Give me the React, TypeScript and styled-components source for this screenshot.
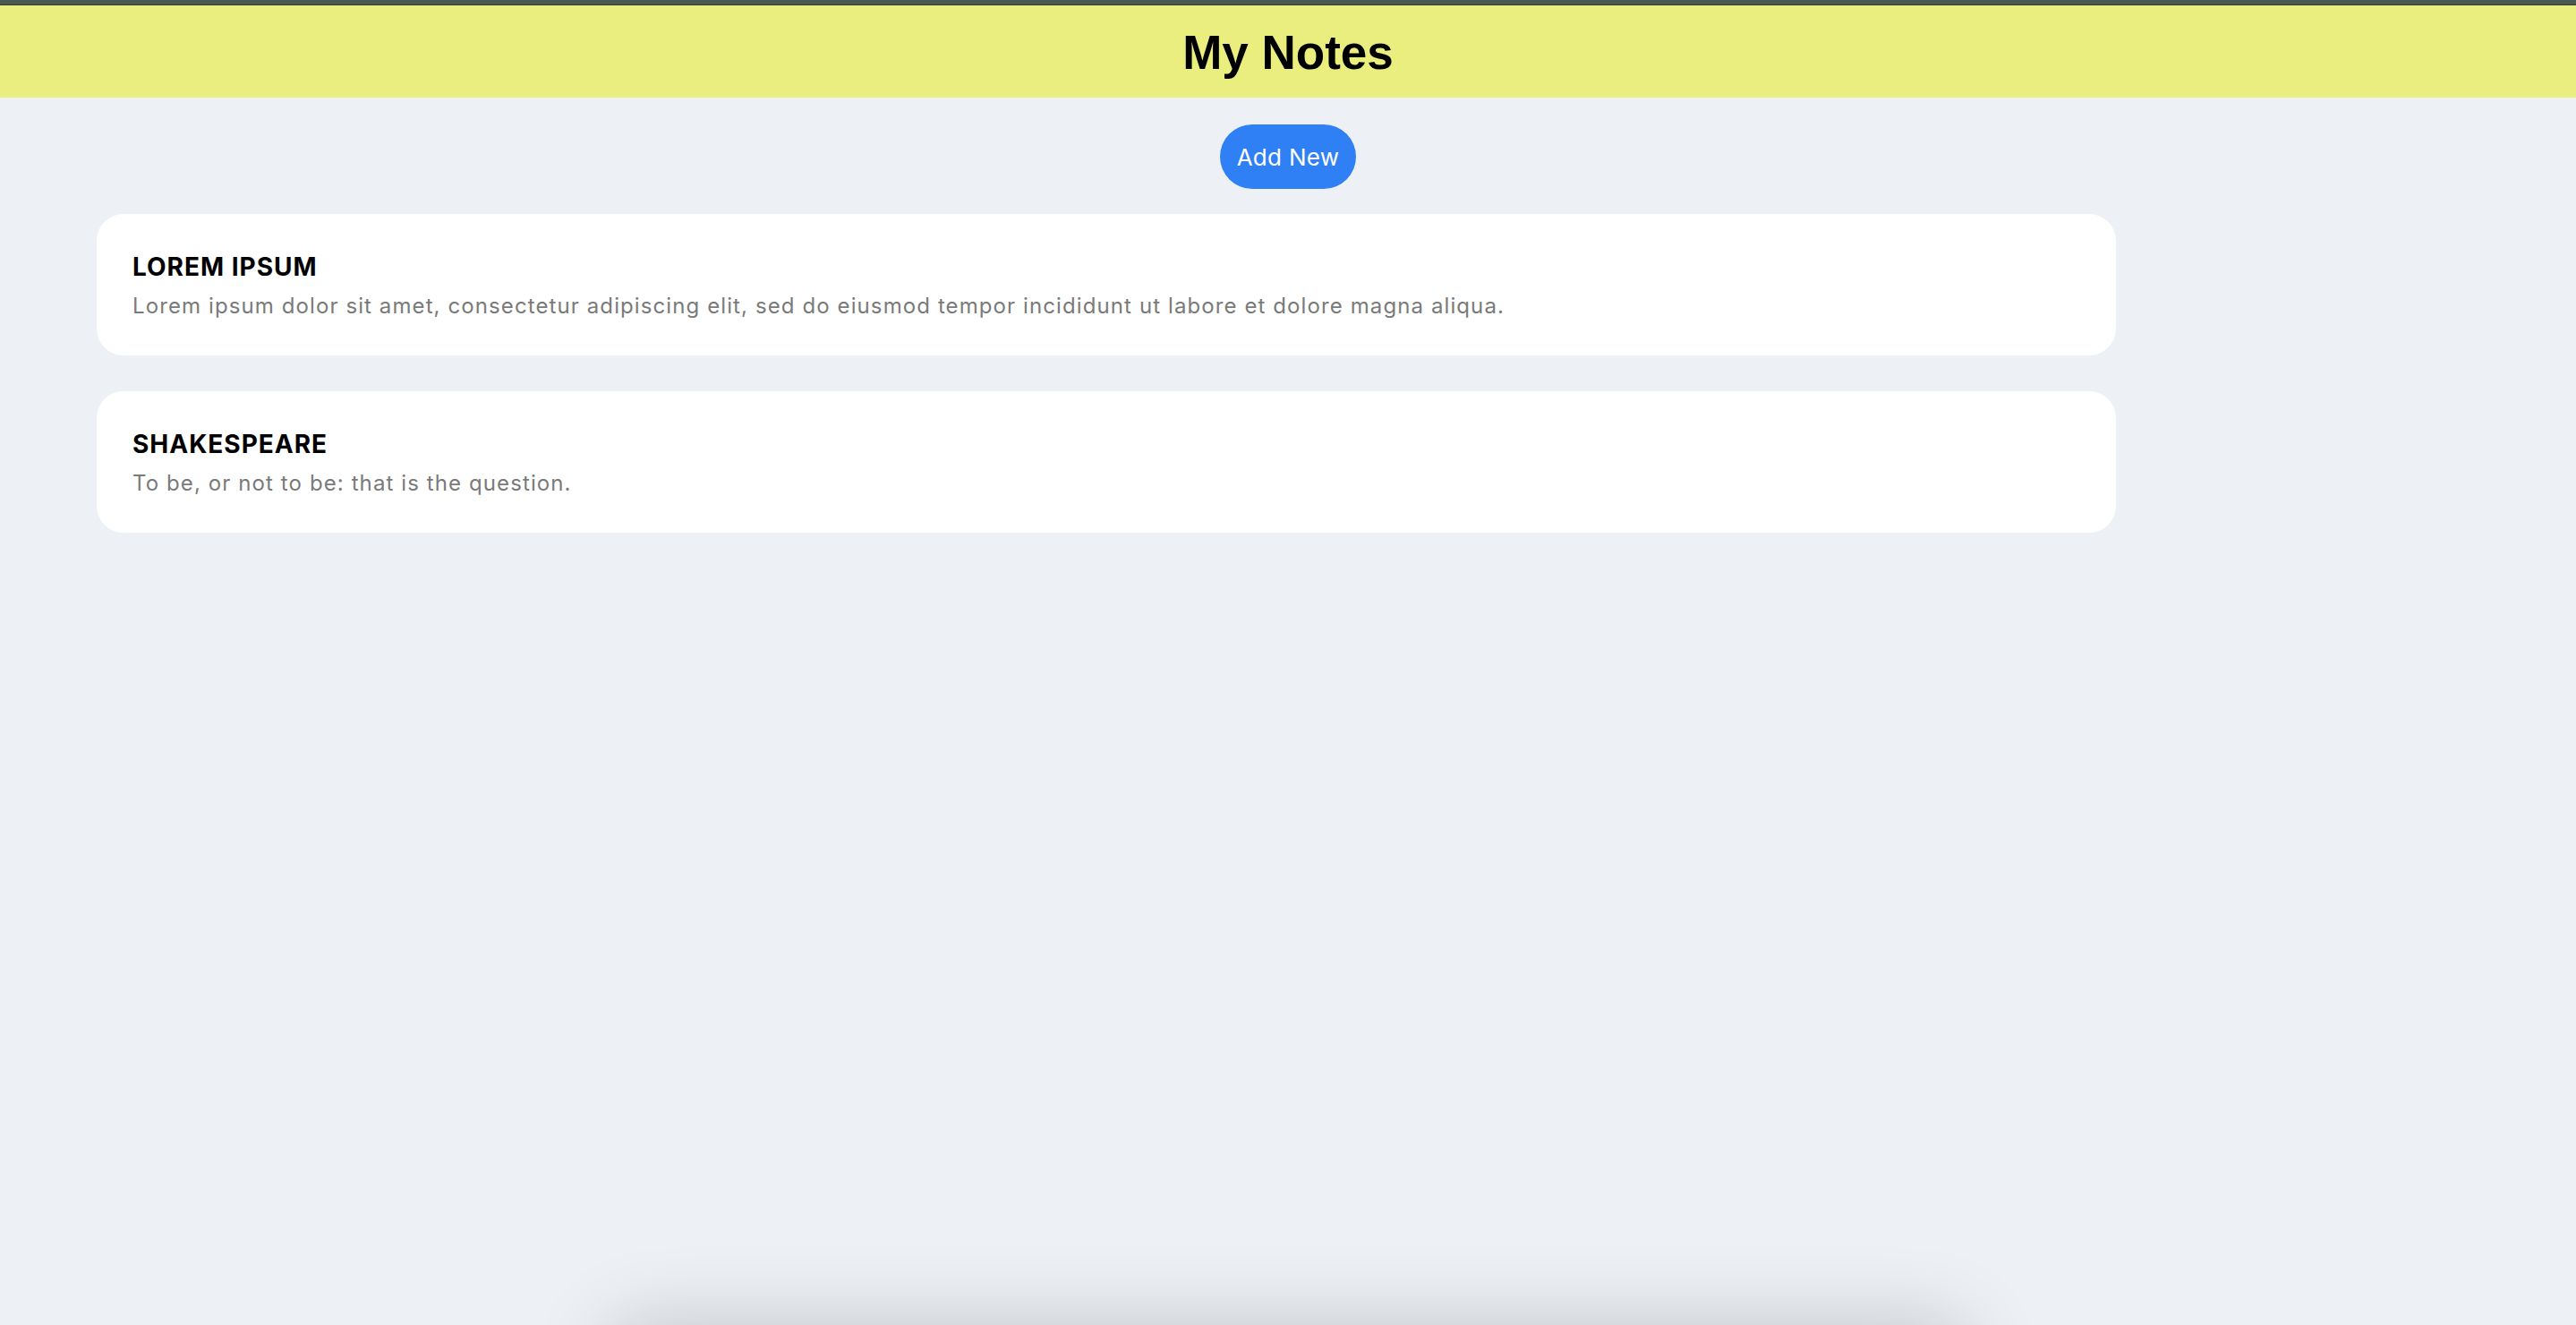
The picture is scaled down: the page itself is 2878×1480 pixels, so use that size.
import React from "react";
import styled, { createGlobalStyle } from "styled-components";

const GlobalStyle = createGlobalStyle`
  html, body {
    margin: 0;
    padding: 0;
    background: #edf0f5;
    min-height: 100%;
  }
  body {
    font-family: Inter, "Noto Sans", sans-serif;
    overflow: hidden;
  }
  #root {
    min-height: 1480px;
  }
`;

const Page = styled.div`
  display: flex;
  flex-direction: column;
  min-height: 1480px;
  background: #edf0f5;
`;

const TopStrip = styled.div`
  height: 5px;
  background: #4a5a53;
  border-bottom: 1px solid #2e3833;
`;

const Header = styled.header`
  height: 103px;
  background: #e9ee7e;
  display: flex;
  align-items: center;
  justify-content: center;
`;

const Title = styled.h1`
  margin: 0;
  font-family: "Liberation Sans", Arial, sans-serif;
  font-weight: 700;
  font-size: 53px;
  color: #000;
  line-height: 61px;
  transform: translateY(1px);
`;

const Toolbar = styled.div`
  display: flex;
  justify-content: center;
  padding-top: 30px;
`;

const AddButton = styled.button`
  height: 72px;
  width: 152px;
  border: none;
  border-radius: 36px;
  background: #2f80f5;
  color: #fff;
  font-family: Inter, "Noto Sans", sans-serif;
  font-size: 26px;
  font-weight: 400;
  letter-spacing: 0.3px;
  cursor: pointer;
  padding: 0;
`;

const NoteList = styled.main`
  display: flex;
  flex-direction: column;
  gap: 40px;
  width: 2256px;
  margin: 28px 0 0 108px;
`;

const NoteCard = styled.article`
  background: #fff;
  border-radius: 30px;
  padding: 42px 40px 40px 40px;
  display: flex;
  flex-direction: column;
`;

const NoteTitle = styled.h2`
  margin: 0 0 12px;
  font-family: Inter, "Noto Sans", sans-serif;
  font-weight: 700;
  font-size: 28px;
  line-height: 34px;
  letter-spacing: 1px;
  color: #000;
`;

const NoteBody = styled.p`
  margin: 0;
  font-family: Inter, "Noto Sans", sans-serif;
  font-weight: 400;
  font-size: 24px;
  line-height: 30px;
  letter-spacing: 1.1px;
  color: #7a7a7a;
`;

const FloatingShade = styled.div`
  position: fixed;
  left: 50%;
  bottom: -200px;
  width: 1510px;
  height: 200px;
  transform: translateX(-50%);
  border-radius: 24px;
  background: #edf0f5;
  box-shadow: 0 0 90px rgba(0, 0, 0, 0.19);
`;

const notes = [
  {
    title: "LOREM IPSUM",
    body: "Lorem ipsum dolor sit amet, consectetur adipiscing elit, sed do eiusmod tempor incididunt ut labore et dolore magna aliqua.",
  },
  {
    title: "SHAKESPEARE",
    body: "To be, or not to be: that is the question.",
  },
];

export default function App() {
  return (
    <>
      <GlobalStyle />
      <Page>
        <TopStrip />
        <Header>
          <Title>My Notes</Title>
        </Header>
        <Toolbar>
          <AddButton>Add New</AddButton>
        </Toolbar>
        <NoteList>
          {notes.map((n) => (
            <NoteCard key={n.title}>
              <NoteTitle>{n.title}</NoteTitle>
              <NoteBody>{n.body}</NoteBody>
            </NoteCard>
          ))}
        </NoteList>
      </Page>
      <FloatingShade />
    </>
  );
}
